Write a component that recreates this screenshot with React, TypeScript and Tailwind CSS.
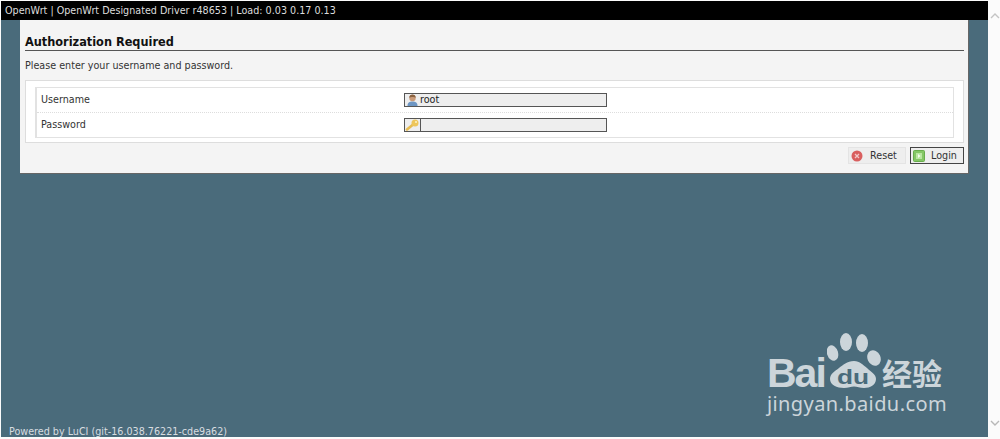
import React from "react";

const BG = "#4a6b7b";

const UserIcon = () => (
  <svg width="11" height="12" viewBox="0 0 11 12" className="shrink-0">
    <path d="M.5 12C.5 8.600 2.500 7.500 5.500 7.500s5 1.100 5 4.500z" fill="#6d96c4" />
    <circle cx="5.500" cy="4" r="3.200" fill="#c99a78" />
    <path d="M2.300 4C2.300 1.500 3.800.6 5.500.6S8.700 1.500 8.700 4C7.500 2.600 3.500 2.600 2.300 4z" fill="#8a6240" />
  </svg>
);

const KeyIcon = () => (
  <svg width="15" height="12" viewBox="0 0 15 12" className="shrink-0">
    <path d="M2 10.500 7.500 6" stroke="#e6bc52" strokeWidth="2.600" strokeLinecap="round" />
    <circle cx="10" cy="4" r="3.500" fill="#eec65a" />
    <circle cx="11" cy="3" r="1" fill="#fdf3c8" />
  </svg>
);

const ResetIcon = () => (
  <svg width="12" height="12" viewBox="0 0 12 12" className="shrink-0">
    <circle cx="6" cy="6" r="5.500" fill="#d95f5f" />
    <path d="M4 4l4 4M8 4l-4 4" stroke="#f2c8c8" strokeWidth="1.300" />
  </svg>
);

const LoginIcon = () => (
  <svg width="12" height="12" viewBox="0 0 12 12" className="shrink-0">
    <rect x=".5" y=".5" width="11" height="11" rx="1" fill="#84c765" stroke="#68ad4c" />
    <rect x="3" y="3" width="6" height="6" fill="#b9e6a0" />
    <path d="M5 4l2.500 2L5 8z" fill="#f3fbee" />
  </svg>
);

const BaiduMark = () => (
  <div className="flex flex-col items-start text-[#ccd5da]">
    <div className="flex items-end h-[56px]">
      <span className="text-[41px] leading-[30px] h-[30px] font-bold font-['Liberation_Sans',sans-serif] tracking-[-2px] w-[60px]">Bai</span>
      <svg width="54" height="56" viewBox="0 0 54 56" className="shrink-0">
        <ellipse cx="5.500" cy="21" rx="5.500" ry="8" transform="rotate(-18 5.500 21)" fill="currentColor" />
        <ellipse cx="19" cy="10" rx="6" ry="9" fill="currentColor" />
        <ellipse cx="35" cy="11" rx="6" ry="9" fill="currentColor" />
        <ellipse cx="47" cy="26" rx="6.500" ry="8" transform="rotate(-25 47 26)" fill="currentColor" />
        <path d="M27 29c6 0 9 4 13 7 4 4 9 6 9 11 0 6-6 9-12 9-4 0-7-1.500-10-1.500S21 56 17 56C10 56 3 53 3 47c0-5 5-8 9-11s8-7 15-7z" fill="currentColor" />
        <text x="10" y="52" fontSize="20" fontWeight="bold" textLength="32" lengthAdjust="spacingAndGlyphs" fontFamily="'Liberation Sans',sans-serif" fill={BG}>du</text>
      </svg>
      <span className="text-[30px] leading-[32px] h-[32px] font-bold ml-[1px] font-['Noto_Sans_CJK_SC',sans-serif]">经验</span>
    </div>
    <span className="text-[20px] leading-[24px] tracking-[0.4px] mt-[4px] font-['Noto_Sans',sans-serif]">jingyan.baidu.com</span>
  </div>
);

function Row({ label, last, children }: { label: string; last?: boolean; children: React.ReactNode }) {
  return (
    <div className={`flex items-center bg-white ${last ? "h-[24px]" : "h-[25px] border-b border-dotted border-[#dddddd]"}`}>
      <span className="w-[367px] pl-[4px] text-[#333333]">{label}</span>
      {children}
    </div>
  );
}

export default function App() {
  return (
    <div className="h-[439px] w-[1000px] overflow-hidden bg-[#fbfbfb] font-['DejaVu_Sans',Verdana,sans-serif] text-[9.600px] leading-[14px] text-[#222222] flex">
      <div className="w-[987px] h-[436px] ml-[1px] mt-[1px] bg-[#4a6b7b] flex flex-col">
        <div className="h-[19px] bg-black text-[#dddddd] pl-[4px] flex items-center shrink-0">
          OpenWrt | OpenWrt Designated Driver r48653 | Load: 0.03 0.17 0.13
        </div>
        <div className="ml-[19px] w-[949px] h-[154px] bg-[#f4f4f4] border-r border-b border-[#666666] pt-[14px] pl-[5px] pr-[4px] shrink-0">
          <h2 className="text-[12.600px] leading-[15px] font-bold [font-stretch:condensed] text-[#111111] border-b border-[#555555] h-[17px]">
            Authorization Required
          </h2>
          <p className="text-[#333333] h-[14px] mt-[8px]">Please enter your username and password.</p>
          <div className="mt-[7px] bg-white border border-[#dddddd] px-[9px] pt-[6px] pb-[4px]">
            <div className="border-2 border-[#e2e2e2] border-t-[1px] border-r-[1px] border-b-[1px]">
              <Row label="Username">
                <div className="w-[203px] h-[14px] border border-[#555555] bg-[#eeeeee] flex items-center pl-[2px] text-[#222222]">
                  <UserIcon />
                  <span className="ml-[2px]">root</span>
                </div>
              </Row>
              <Row label="Password" last>
                <div className="w-[203px] h-[14px] border border-[#555555] bg-[#eeeeee] flex items-center">
                  <KeyIcon />
                  <div className="h-full w-[1px] bg-[#555555]" />
                </div>
              </Row>
            </div>
          </div>
          <div className="flex justify-end gap-[4px] mt-[4px]">
            <div className="w-[58px] h-[17px] bg-[#eeeeee] border border-[#e4e4e4] flex items-center pl-[2px] text-[#333333]">
              <ResetIcon />
              <span className="ml-[7px]">Reset</span>
            </div>
            <div className="w-[54px] h-[17px] bg-[#eeeeee] border border-[#444444] flex items-center pl-[2px] text-[#333333]">
              <LoginIcon />
              <span className="ml-[6px]">Login</span>
            </div>
          </div>
        </div>
        <div className="flex-1 flex flex-col justify-end">
          <div className="flex justify-end pr-[41px] pb-[11px]">
            <BaiduMark />
          </div>
          <div className="pl-[8px] h-[10px] text-[#d8dde0] leading-[10px]">
            Powered by LuCI (git-16.038.76221-cde9a62)
          </div>
        </div>
      </div>
      <div className="flex-1 relative bg-[#fbfbfb]">
        <svg width="10" height="6" viewBox="0 0 10 6" className="absolute top-[13px] left-[2px]">
          <path d="M1 5l4-4 4 4" fill="none" stroke="#c4c4c4" strokeWidth="1.400" />
        </svg>
        <svg width="10" height="6" viewBox="0 0 10 6" className="absolute top-[420px] left-[2px]">
          <path d="M1 1l4 4 4-4" fill="none" stroke="#b8b8b8" strokeWidth="1.400" />
        </svg>
      </div>
    </div>
  );
}
